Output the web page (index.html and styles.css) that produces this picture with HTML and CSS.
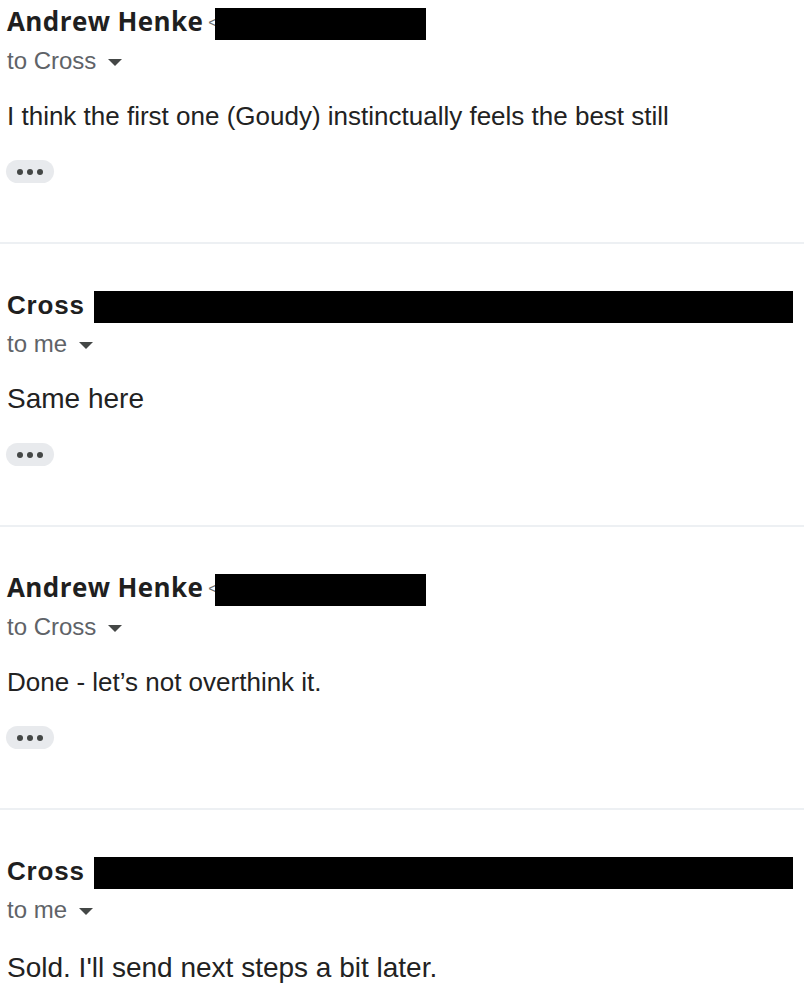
FILE: index.html
```html
<!DOCTYPE html>
<html lang="en">
<head>
<meta charset="utf-8">
<title>Thread</title>
<link rel="stylesheet" href="styles.css">
</head>
<body>
<div class="thread">
  <div class="msg">
    <div class="head">
      <span class="name name-a">Andrew Henke</span>
      <span class="lt">&lt;</span>
      <span class="redact redact-short"></span>
    </div>
    <div class="to">to Cross <span class="caret"></span></div>
    <div class="body">I think the first one (Goudy) instinctually feels the best still</div>
    <div class="more"><span></span><span></span><span></span></div>
  </div>
  <div class="msg">
    <div class="head">
      <span class="name name-c">Cross</span>
      <span class="redact redact-long"></span>
    </div>
    <div class="to">to me <span class="caret"></span></div>
    <div class="body body-lg">Same here</div>
    <div class="more"><span></span><span></span><span></span></div>
  </div>
  <div class="msg">
    <div class="head">
      <span class="name name-a">Andrew Henke</span>
      <span class="lt">&lt;</span>
      <span class="redact redact-short"></span>
    </div>
    <div class="to">to Cross <span class="caret"></span></div>
    <div class="body">Done - let’s not overthink it.</div>
    <div class="more"><span></span><span></span><span></span></div>
  </div>
  <div class="msg">
    <div class="head">
      <span class="name name-c">Cross</span>
      <span class="redact redact-long"></span>
    </div>
    <div class="to">to me <span class="caret"></span></div>
    <div class="body body-lg body-last">Sold. I'll send next steps a bit later.</div>
  </div>
</div>
</body>
</html>
```

FILE: styles.css
```css
html, body {
  margin: 0;
  padding: 0;
  background: #ffffff;
}
body {
  font-family: "Liberation Sans", Arial, sans-serif;
  color: #202124;
  overflow: hidden;
}
.thread {
  display: flex;
  flex-direction: column;
}
.msg {
  padding: 47px 0 59px 7px;
  border-bottom: 2px solid #edf0f3;
}
.msg:first-child {
  padding-top: 8px;
}
.head {
  display: flex;
  align-items: center;
  height: 32px;
}
.name {
  font-weight: 700;
  color: #1f1f1f;
  white-space: nowrap;
}
.name-a {
  font-family: "Open Sans", Arial, sans-serif;
  font-size: 26px;
  letter-spacing: 0.4px;
  line-height: 32px;
  margin-top: -6px;
}
.name-c {
  font-family: "Liberation Sans", Arial, sans-serif;
  font-size: 26px;
  letter-spacing: 0.8px;
  line-height: 32px;
  margin-top: -4px;
}
.lt {
  color: #6b6f73;
  font-size: 16px;
  margin-left: 5px;
  margin-top: -2px;
}
.redact {
  display: block;
  background: #000;
  height: 32px;
}
.redact-short { width: 211px; margin-left: -3px; }
.redact-long { width: 699px; margin-left: 9px; }
.to {
  margin-top: 8px;
  font-family: "Liberation Sans", Arial, sans-serif;
  font-size: 24px;
  line-height: 26px;
  color: #5f6368;
  display: flex;
  align-items: center;
}
.caret {
  display: inline-block;
  width: 0;
  height: 0;
  border-left: 7px solid transparent;
  border-right: 7px solid transparent;
  border-top: 7px solid #444746;
  margin-left: 12px;
  margin-top: 2px;
}
.body {
  margin-top: 27px;
  font-size: 26px;
  line-height: 30px;
  color: #222222;
}
.body-lg {
  font-size: 28px;
}
.body-last {
  margin-top: 30px;
}
.more {
  margin-top: 29px;
  margin-left: -1px;
  width: 48px;
  height: 23px;
  border-radius: 12px;
  background: #e8eaed;
  display: flex;
  align-items: center;
  justify-content: center;
  gap: 4px;
}
.more span {
  width: 6px;
  height: 6px;
  border-radius: 50%;
  background: #444746;
}
```
